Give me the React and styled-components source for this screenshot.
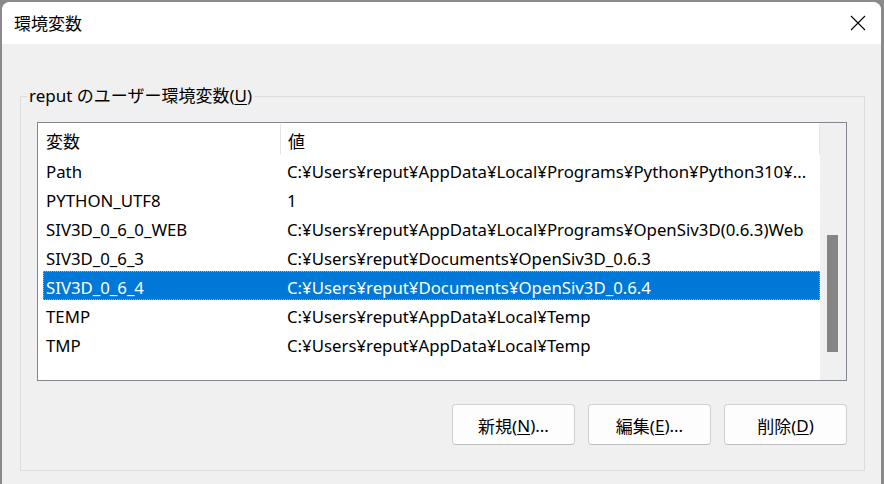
import React from "react";
import styled, { createGlobalStyle } from "styled-components";

const Global = createGlobalStyle`
  html, body { margin: 0; padding: 0; }
  body {
    background: #8a8a8a;
    font-family: "Noto Sans", "Noto Sans CJK JP", sans-serif;
    color: #000;
    width: 884px;
    height: 484px;
    overflow: hidden;
  }
`;

const Screen = styled.div`
  width: 884px;
  height: 484px;
  padding: 2px 0 0 2px;
  box-sizing: border-box;
`;

const Window = styled.div`
  width: 879px;
  height: 482px;
  border-radius: 8px 8px 0 0;
  overflow: hidden;
  display: flex;
  flex-direction: column;
  background: #f0f0f0;
`;

const TitleBar = styled.div`
  height: 42px;
  flex: none;
  background: #fff;
  display: flex;
  align-items: center;
  justify-content: space-between;
  padding: 0 15px 0 12px;
`;

const Title = styled.div`
  font-size: 17px;
  line-height: 20px;
  font-family: "Noto Sans CJK JP", sans-serif;
`;

const CloseBtn = styled.div`
  width: 16px;
  height: 16px;
  display: flex;
`;

const Body = styled.div`
  flex: 1;
  padding: 42px 16px 0 18px;
`;

const Group = styled.fieldset`
  margin: 0;
  padding: 0;
  border: 1px solid #dcdcdc;
  min-width: 0;
`;

const Legend = styled.legend`
  margin-left: 6px;
  padding: 0 2px;
  font-size: 17px;
  line-height: 20px;
  font-family: "Noto Sans", "Noto Sans CJK JP", sans-serif;
`;

const GroupInner = styled.div`
  padding: 16px 17px 25px 16px;
  display: flex;
  flex-direction: column;
`;

const ListBox = styled.div`
  height: 259px;
  box-sizing: border-box;
  border: 1px solid #828790;
  background: #fff;
  display: flex;
`;

const ListContent = styled.div`
  flex: 1;
  display: flex;
  flex-direction: column;
  min-width: 0;
`;

const Header = styled.div`
  height: 32px;
  display: flex;
  flex: none;
`;

const HeadCell = styled.div`
  width: ${(p) => (p.$w ? `${p.$w}px` : "auto")};
  flex: ${(p) => (p.$w ? "none" : "1")};
  box-sizing: border-box;
  padding-left: ${(p) => p.$pl}px;
  padding-top: 2px;
  display: flex;
  align-items: center;
  font-size: 17px;
  font-family: "Noto Sans CJK JP", sans-serif;
  position: relative;
  &::after {
    content: "";
    position: absolute;
    right: 0;
    top: 1px;
    bottom: 1px;
    width: 1px;
    background: #e5e5e5;
  }
`;

const Row = styled.div`
  height: 29px;
  margin-left: 5px;
  display: flex;
  box-sizing: border-box;
  background: ${(p) => (p.$sel ? "#0078d7" : "transparent")};
  color: ${(p) => (p.$sel ? "#fff" : "#000")};
  border: 1px ${(p) => (p.$sel ? "dotted #e0a050" : "solid transparent")};
`;

const Cell = styled.div`
  width: ${(p) => (p.$w ? `${p.$w}px` : "auto")};
  flex: ${(p) => (p.$w ? "none" : "1")};
  min-width: 0;
  box-sizing: border-box;
  padding-left: ${(p) => p.$pl}px;
  padding-top: 3px;
  display: flex;
  align-items: center;
  font-size: 16.8px;
  white-space: nowrap;
  overflow: hidden;
`;

const ScrollTrack = styled.div`
  width: 26px;
  flex: none;
  background: #f0f0f0;
  display: flex;
  flex-direction: column;
  padding-left: 7px;
  box-sizing: border-box;
`;

const Thumb = styled.div`
  width: 11px;
  height: ${(p) => p.$h}px;
  margin-top: ${(p) => p.$top}px;
  background: #858585;
`;

const ButtonRow = styled.div`
  display: flex;
  justify-content: flex-end;
  gap: 13px;
  margin-top: 23px;
`;

const Button = styled.button`
  width: 123px;
  height: 41px;
  box-sizing: border-box;
  background: #fdfdfd;
  border: 1px solid #d0d0d0;
  border-bottom-color: #c0c0c0;
  border-radius: 4px;
  font-size: 17px;
  font-family: "Noto Sans", "Noto Sans CJK JP", sans-serif;
  color: #000;
  padding: 2px 0 0;
  display: flex;
  align-items: center;
  justify-content: center;
`;

const Key = styled.span`
  text-decoration: underline;
  text-underline-offset: 2px;
`;

const rows = [
  ["Path", "C:¥Users¥reput¥AppData¥Local¥Programs¥Python¥Python310¥..."],
  ["PYTHON_UTF8", "1"],
  ["SIV3D_0_6_0_WEB", "C:¥Users¥reput¥AppData¥Local¥Programs¥OpenSiv3D(0.6.3)Web"],
  ["SIV3D_0_6_3", "C:¥Users¥reput¥Documents¥OpenSiv3D_0.6.3"],
  ["SIV3D_0_6_4", "C:¥Users¥reput¥Documents¥OpenSiv3D_0.6.4"],
  ["TEMP", "C:¥Users¥reput¥AppData¥Local¥Temp"],
  ["TMP", "C:¥Users¥reput¥AppData¥Local¥Temp"],
];

export default function App() {
  return (
    <Screen>
      <Global />
      <Window>
        <TitleBar>
          <Title>環境変数</Title>
          <CloseBtn>
            <svg width="16" height="16" viewBox="0 0 16 16">
              <path d="M1 1 L15 15 M15 1 L1 15" stroke="#000" strokeWidth="1.1" fill="none" />
            </svg>
          </CloseBtn>
        </TitleBar>
        <Body>
          <Group>
            <Legend>
              reput のユーザー環境変数(<Key>U</Key>)
            </Legend>
            <GroupInner>
              <ListBox>
                <ListContent>
                  <Header>
                    <HeadCell $w={243} $pl={8}>変数</HeadCell>
                    <HeadCell $pl={7}>値</HeadCell>
                  </Header>
                  {rows.map(([k, v], i) => (
                    <Row key={k} $sel={i === 4}>
                      <Cell $w={237} $pl={2}>{k}</Cell>
                      <Cell $pl={6}>{v}</Cell>
                    </Row>
                  ))}
                </ListContent>
                <ScrollTrack>
                  <Thumb $top={112} $h={117} />
                </ScrollTrack>
              </ListBox>
              <ButtonRow>
                <Button>新規(<Key>N</Key>)...</Button>
                <Button>編集(<Key>E</Key>)...</Button>
                <Button>削除(<Key>D</Key>)</Button>
              </ButtonRow>
            </GroupInner>
          </Group>
        </Body>
      </Window>
    </Screen>
  );
}
